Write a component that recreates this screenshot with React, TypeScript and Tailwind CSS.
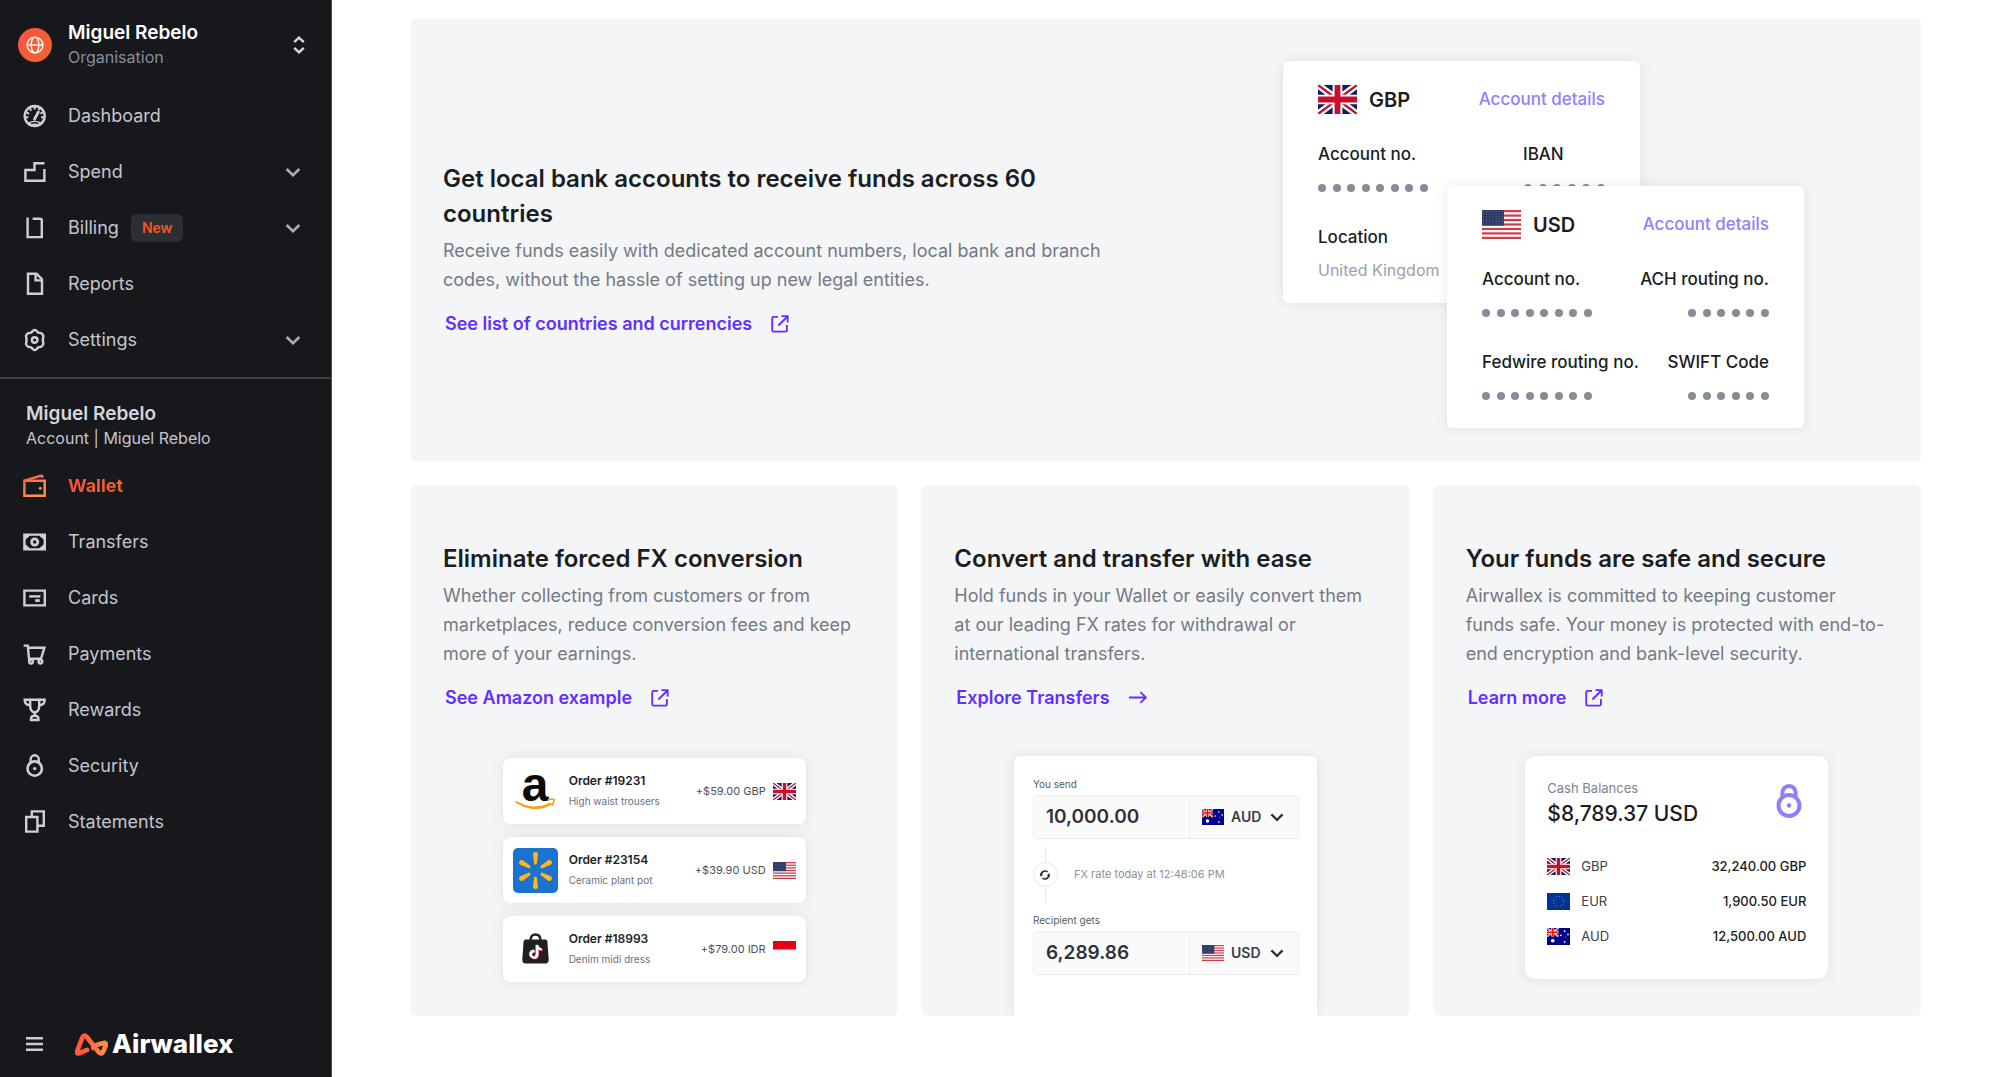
import type { ReactNode } from "react";
import { FaTiktok } from "react-icons/fa6";

type IconName =
  | "dashboard"
  | "spend"
  | "billing"
  | "reports"
  | "settings"
  | "wallet"
  | "transfers"
  | "cards"
  | "payments"
  | "rewards"
  | "security"
  | "statements";

type NavItem = {
  label: string;
  icon: IconName;
  badge?: string;
  expandable?: boolean;
  active?: boolean;
};

const orgNav: NavItem[] = [
  { label: "Dashboard", icon: "dashboard" },
  { label: "Spend", icon: "spend", expandable: true },
  { label: "Billing", icon: "billing", badge: "New", expandable: true },
  { label: "Reports", icon: "reports" },
  { label: "Settings", icon: "settings", expandable: true },
];

const accountNav: NavItem[] = [
  { label: "Wallet", icon: "wallet", active: true },
  { label: "Transfers", icon: "transfers" },
  { label: "Cards", icon: "cards" },
  { label: "Payments", icon: "payments" },
  { label: "Rewards", icon: "rewards" },
  { label: "Security", icon: "security" },
  { label: "Statements", icon: "statements" },
];

type FlagCode = "GB" | "US" | "AU" | "EU" | "ID";

const orders: { id: string; item: string; amount: string; flag: FlagCode; logo: ReactNode }[] = [
  { id: "Order #19231", item: "High waist trousers", amount: "+$59.00 GBP", flag: "GB", logo: <AmazonLogo /> },
  { id: "Order #23154", item: "Ceramic plant pot", amount: "+$39.90 USD", flag: "US", logo: <WalmartLogo /> },
  { id: "Order #18993", item: "Denim midi dress", amount: "+$79.00 IDR", flag: "ID", logo: <TikTokShopLogo /> },
];

const balances: { code: string; flag: FlagCode; amount: string }[] = [
  { code: "GBP", flag: "GB", amount: "32,240.00 GBP" },
  { code: "EUR", flag: "EU", amount: "1,900.50 EUR" },
  { code: "AUD", flag: "AU", amount: "12,500.00 AUD" },
];

export default function App() {
  return (
    <div className="flex min-h-screen bg-white font-[Inter,sans-serif] text-[#1a1d21]">
      <Sidebar />
      <main className="flex-1 px-[78px] pt-[18px] pb-[60px]">
        <Hero />
        <div className="mt-[23px] grid grid-cols-3 gap-[23px]">
          <FeatureCard
            title="Eliminate forced FX conversion"
            body="Whether collecting from customers or from marketplaces, reduce conversion fees and keep more of your earnings."
            link="See Amazon example"
            external
          >
            <OrdersPreview />
          </FeatureCard>
          <FeatureCard
            title="Convert and transfer with ease"
            body="Hold funds in your Wallet or easily convert them at our leading FX rates for withdrawal or international transfers."
            link="Explore Transfers"
          >
            <ConvertPreview />
          </FeatureCard>
          <FeatureCard
            title="Your funds are safe and secure"
            body="Airwallex is committed to keeping customer funds safe. Your money is protected with end-to-end encryption and bank-level security."
            link="Learn more"
            external
          >
            <BalancesPreview />
          </FeatureCard>
        </div>
      </main>
    </div>
  );
}

function Sidebar() {
  return (
    <aside className="flex w-[332px] shrink-0 flex-col border-r border-[#4a4d52] bg-[#17181c] text-[#c3c6cc]">
      <button type="button" className="mt-5 flex items-center gap-4 pr-6 pl-[18px] text-left">
        <span className="flex size-[34px] items-center justify-center rounded-full bg-linear-135 from-[#ff4f42] to-[#e8692a]">
          <GlobeIcon />
        </span>
        <span className="flex-1">
          <span className="block text-[19px] leading-[25px] font-semibold text-white">Miguel Rebelo</span>
          <span className="block text-base leading-[25px] text-[#868e98]">Organisation</span>
        </span>
        <svg viewBox="0 0 16 20" className="h-5 w-4" fill="none" stroke="#d5d8dd" strokeWidth="2.4">
          <path d="M3.2 7.2 8 2.6l4.800 4.600M3.200 12.800 8 17.400l4.800-4.600" />
        </svg>
      </button>

      <nav className="mt-[18px]">
        <NavList items={orgNav} />
      </nav>

      <div className="mt-[9px] border-t-2 border-[#3d4045] px-[26px] pt-[22px]">
        <p className="text-[19px] leading-[25px] font-semibold text-[#d3d6db]">Miguel Rebelo</p>
        <p className="text-base leading-[25px]">Account | Miguel Rebelo</p>
      </div>

      <nav className="mt-[7px]">
        <NavList items={accountNav} />
      </nav>

      <div className="mt-auto flex items-center gap-8 px-[26px] pb-4">
        <button type="button" aria-label="Collapse menu">
          <svg viewBox="0 0 17 16" className="h-4 w-[17px]" stroke="#c9cbd6" strokeWidth="2.6">
            <path d="M0 2.2h17M0 8h17M0 13.800h17" />
          </svg>
        </button>
        <a href="#" className="flex items-center gap-1 text-[26px] leading-[34px] font-extrabold text-white">
          <svg viewBox="0 0 98 68" className="h-[23px] w-[33px]" fill="none">
            <defs>
              <linearGradient id="mark" x1="0" y1="0" x2="1" y2="0">
                <stop offset="0.3" stopColor="#ff5a40" />
                <stop offset="0.85" stopColor="#ff8a3c" />
              </linearGradient>
            </defs>
            <path
              d="M36 50 13 60Q3 63 7 53L22 13Q27 2 35 12L70 56Q79 66 84 54L91 38Q94 27 83 30L68 34Q60 37 54 44"
              stroke="url(#mark)"
              strokeWidth="14"
              strokeLinecap="round"
              strokeLinejoin="round"
            />
          </svg>
          Airwallex
        </a>
      </div>
    </aside>
  );
}

function NavList({ items }: { items: NavItem[] }) {
  return (
    <ul>
      {items.map((item) => (
        <li key={item.label}>
          <a
            href="#"
            aria-current={item.active ? "page" : undefined}
            className="flex h-14 items-center gap-[21px] pr-[30px] pl-[23px] text-lg"
          >
            <NavIcon name={item.icon} />
            <span className="flex flex-1 items-center gap-3">
              {item.active ? (
                <span className="bg-linear-to-r from-[#ff4f42] to-[#e8692a] bg-clip-text font-bold text-transparent">
                  {item.label}
                </span>
              ) : (
                item.label
              )}
              {item.badge ? (
                <span className="rounded-md bg-[#2b2e33] px-[11px] text-sm leading-7 font-semibold text-[#f2562f]">
                  {item.badge}
                </span>
              ) : null}
            </span>
            {item.expandable ? <Chevron className="size-4 text-[#a9aeb8]" /> : null}
          </a>
        </li>
      ))}
    </ul>
  );
}

function Hero() {
  return (
    <section className="flex justify-between rounded-md bg-[#f4f5f7] pt-[43px] pr-[117px] pb-[34px] pl-[33px]">
      <div className="max-w-[680px] pt-[100px]">
        <h2 className="text-2xl leading-[35px] font-semibold">
          Get local bank accounts to receive funds across 60 countries
        </h2>
        <p className="mt-[5px] text-lg leading-[29px] text-[#737a85]">
          Receive funds easily with dedicated account numbers, local bank and branch codes, without the hassle of
          setting up new legal entities.
        </p>
        <TextLink label="See list of countries and currencies" external />
      </div>

      <div className="relative h-[367px] w-[521px] shrink-0">
        <BankCard flag="GB" code="GBP">
          <div className="flex flex-col gap-8">
            <MaskedField label="Account no." />
            <div>
              <p>Location</p>
              <p className="mt-2 text-base font-normal text-[#9aa1ab]">United Kingdom</p>
            </div>
          </div>
          <div className="w-[82px]">
            <MaskedField label="IBAN" short />
          </div>
        </BankCard>
        <div className="absolute right-0 bottom-0">
          <BankCard flag="US" code="USD">
            <div className="flex flex-col gap-8">
              <MaskedField label="Account no." />
              <MaskedField label="Fedwire routing no." />
            </div>
            <div className="flex flex-col gap-8 text-right">
              <MaskedField label="ACH routing no." short />
              <MaskedField label="SWIFT Code" short />
            </div>
          </BankCard>
        </div>
      </div>
    </section>
  );
}

function BankCard({ flag, code, children }: { flag: FlagCode; code: string; children: ReactNode }) {
  return (
    <div className="h-[242px] w-[357px] rounded-md bg-white px-[35px] pt-6 shadow-[0_0_14px_rgba(0,0,0,0.09)]">
      <div className="flex items-center">
        <Flag code={flag} className="h-[29px] w-[39px]" />
        <span className="ml-3 text-xl font-semibold">{code}</span>
        <a href="#" className="ml-auto text-[17px] font-medium text-[#8f80ff]">
          Account details
        </a>
      </div>
      <div className="mt-[27px] flex justify-between text-[17px] leading-[26px] font-medium whitespace-nowrap">
        {children}
      </div>
    </div>
  );
}

function MaskedField({ label, short }: { label: string; short?: boolean }) {
  const count = short ? 6 : 8;
  return (
    <div className="flex flex-col">
      <p>{label}</p>
      <div className={short ? "mt-[17px] ml-auto flex w-[81px] justify-between" : "mt-[17px] flex w-[110px] justify-between"}>
        {Array.from({ length: count }, (_, i) => (
          <span key={i} className="size-2 rounded-full bg-[#868c99]" />
        ))}
      </div>
    </div>
  );
}

function FeatureCard({
  title,
  body,
  link,
  external,
  children,
}: {
  title: string;
  body: string;
  link: string;
  external?: boolean;
  children: ReactNode;
}) {
  return (
    <section className="flex flex-col rounded-md bg-[#f4f5f7] px-[33px] pt-14">
      <h2 className="text-2xl leading-[35px] font-semibold">{title}</h2>
      <p className="mt-[5px] text-lg leading-[29px] text-[#737a85]">{body}</p>
      <TextLink label={link} external={external} />
      <div className="mx-auto mt-11 w-[303px] flex-1">{children}</div>
    </section>
  );
}

function TextLink({ label, external }: { label: string; external?: boolean }) {
  return (
    <a
      href="#"
      className="mt-[15px] flex items-center gap-[19px] px-[2px] text-lg leading-[29px] font-semibold text-[#612fff]"
    >
      {label}
      {external ? (
        <svg viewBox="0 0 18 18" className="size-[18px]" fill="none" stroke="currentColor" strokeWidth="1.8">
          <path d="M7 1.9H2.6Q1.2 1.9 1.2 3.3v11.9q0 1.4 1.4 1.4h11.900q1.400 0 1.400-1.400V10M10.500 1.200h6.200v6.200M16.400 1.500 7.400 10.500" />
        </svg>
      ) : (
        <svg viewBox="0 0 18 18" className="size-[18px]" fill="none" stroke="currentColor" strokeWidth="1.8">
          <path d="M0 8.500h17M11.400 3.100 17 8.500l-5.600 5.400" />
        </svg>
      )}
    </a>
  );
}

function OrdersPreview() {
  return (
    <ul className="flex flex-col gap-[13px] pt-0.5">
      {orders.map((order) => (
        <li
          key={order.id}
          className="flex h-[66px] items-center rounded-lg bg-white px-[10px] shadow-[0_0_14px_rgba(0,0,0,0.09)]"
        >
          <span className="flex size-[45px] items-center justify-center">{order.logo}</span>
          <div className="ml-[11px]">
            <p className="text-xs leading-5 font-semibold">{order.id}</p>
            <p className="text-[10px] leading-5 text-[#6b717b]">{order.item}</p>
          </div>
          <span className="ml-auto text-[11px] text-[#4c5159]">{order.amount}</span>
          <Flag code={order.flag} className="ml-[7px] h-[17px] w-[23px]" />
        </li>
      ))}
    </ul>
  );
}

function ConvertPreview() {
  return (
    <form className="h-full min-h-[260px] rounded-t-md bg-white pt-[18px] pr-[18px] pl-[19px] shadow-[0_0_14px_rgba(0,0,0,0.09)] [clip-path:inset(-20px_-20px_0_-20px)]">
      <AmountField id="send" label="You send" amount="10,000.00" flag="AU" currency="AUD" />
      <div className="flex items-center py-2">
        <span className="flex flex-col items-center">
          <span className="h-[15px] w-px bg-[#e4e6e9]" />
          <span className="flex size-[25px] items-center justify-center rounded-full border border-[#e8eaed]">
            <svg viewBox="0 0 12 12" className="size-3" fill="none" stroke="#2a2d33" strokeWidth="1.6">
              <path d="M2.200 7.200A4 4 0 0 1 8.600 3M9.800 4.800A4 4 0 0 1 3.400 9" />
              <path d="M.6 6.200h3.600L2.400 3.900zM7.800 5.800h3.600L9.600 8.100z" fill="#2a2d33" stroke="none" />
            </svg>
          </span>
          <span className="h-[15px] w-px bg-[#e4e6e9]" />
        </span>
        <span className="ml-4 text-[11px] text-[#8b919b]">FX rate today at 12:48:06 PM</span>
      </div>
      <AmountField id="receive" label="Recipient gets" amount="6,289.86" flag="US" currency="USD" />
    </form>
  );
}

function AmountField({
  id,
  label,
  amount,
  flag,
  currency,
}: {
  id: string;
  label: string;
  amount: string;
  flag: FlagCode;
  currency: string;
}) {
  return (
    <div>
      <label htmlFor={id} className="mb-px block text-[10px] leading-5 text-[#565b64]">
        {label}
      </label>
      <div className="flex h-11 rounded border border-[#eceef0] bg-[#fafafb]">
        <input
          id={id}
          defaultValue={amount}
          className="w-[156px] border-r border-[#eceef0] px-3 text-[19px] font-semibold text-[#2f3238] outline-none"
        />
        <div className="relative flex flex-1 items-center pl-3">
          <Flag code={flag} className="h-4 w-[22px]" />
          <select
            aria-label={`${label} currency`}
            defaultValue={currency}
            className="flex-1 appearance-none bg-transparent pl-[7px] text-sm font-semibold text-[#3b3e45] outline-none"
          >
            <option>{currency}</option>
          </select>
          <Chevron className="pointer-events-none absolute top-1/2 right-[14px] size-[14px] -translate-y-1/2 text-[#2f3238]" />
        </div>
      </div>
    </div>
  );
}

function BalancesPreview() {
  return (
    <div className="h-[223px] rounded-[10px] bg-white px-[22px] pt-[19px] shadow-[0_0_14px_rgba(0,0,0,0.09)]">
      <div className="flex items-center justify-between pr-1">
        <div>
          <p className="text-[13px] leading-[26px] text-[#7d838d]">Cash Balances</p>
          <p className="text-[21px] leading-[26px] font-medium">$8,789.37 USD</p>
        </div>
        <svg viewBox="0 0 26 34" className="h-[34px] w-[26px]" fill="none" stroke="#8c7fff" strokeWidth="4">
          <circle cx="13" cy="21.500" r="10.500" />
          <path d="M6.400 12V8.600a6.600 6.600 0 0 1 13.200 0V12" />
          <circle cx="13" cy="21.500" r="2.200" fill="#8c7fff" stroke="none" />
        </svg>
      </div>
      <table className="mt-[22px] w-full text-[13px]">
        <tbody>
          {balances.map((row) => (
            <tr key={row.code} className="h-[35px]">
              <td className="w-[34px]">
                <Flag code={row.flag} className="h-[17px] w-[23px]" />
              </td>
              <th scope="row" className="text-left font-normal text-[#3c4047]">
                {row.code}
              </th>
              <td className="text-right font-medium">{row.amount}</td>
            </tr>
          ))}
        </tbody>
      </table>
    </div>
  );
}

function Chevron({ className }: { className?: string }) {
  return (
    <svg viewBox="0 0 16 16" className={className} fill="none" stroke="currentColor" strokeWidth="2.6">
      <path d="M1.600 5 8 11.200 14.400 5" />
    </svg>
  );
}

function GlobeIcon() {
  return (
    <svg viewBox="0 0 18 18" className="size-[18px]" fill="none" stroke="#fff" strokeWidth="1.4">
      <circle cx="9" cy="9" r="7.900" />
      <ellipse cx="9" cy="9" rx="3.800" ry="7.900" />
      <path d="M1 9h16" />
    </svg>
  );
}

function NavIcon({ name }: { name: IconName }) {
  return (
    <svg viewBox="0 0 24 24" className="size-6 shrink-0" fill="none" stroke="#cdcfda" strokeWidth="2.4">
      {iconShapes[name]}
    </svg>
  );
}

const iconShapes: Record<IconName, ReactNode> = {
  dashboard: (
    <>
      <circle cx="11.7" cy="12" r="10" />
      <path d="M5 18.6Q11.7 15 18.4 18.6L15.5 21.6H8z" fill="#cdcfda" stroke="none" />
      <path d="M8 19.4Q11.7 18 15.4 19.4" stroke="#17181c" strokeWidth="1.4" />
      <path d="M11.5 15.2 15.4 8" strokeWidth="2.8" strokeLinecap="round" />
      <path
        d="M11.7 2v3.6M6.6 4l1.6 2.8M16.8 4l-1.2 2M3.4 8.4l2.8 1.500M20 8.400l-2.600 1.200M2.400 13.200h3M21 13.200h-3"
        strokeWidth="2"
      />
    </>
  ),
  spend: <path d="M21.500 3.200H11.500V10H2.400v10.800h19V9" />,
  billing: <path d="M4.600 1.600v19.500h14.200V4.600q0-1.800-1.800-1.800H9.600" />,
  reports: (
    <>
      <path d="M5 1.800v20h14V7.200l-5.400-5.400z" />
      <path d="M12.600 2v6.400h6.200" />
    </>
  ),
  settings: (
    <>
      <path
        d="M10.100 2.600Q11.700 1.400 13.300 2.600L15.200 4.600 18 5.200Q19.900 6 20.400 8L19.800 12 20.400 16Q19.900 18 18 18.800L15.200 19.400 13.300 21.400Q11.700 22.600 10.100 21.400L8.200 19.400 5.400 18.800Q3.500 18 3 16L3.600 12 3 8Q3.500 6 5.400 5.200L8.200 4.600z"
        strokeLinejoin="round"
      />
      <circle cx="11.700" cy="12" r="2.800" />
    </>
  ),
  wallet: (
    <>
      <defs>
        <linearGradient id="wallet" gradientUnits="userSpaceOnUse" x1="2" y1="2" x2="14" y2="18">
          <stop offset="0" stopColor="#ff5a45" />
          <stop offset="1" stopColor="#ff933e" />
        </linearGradient>
      </defs>
      <path d="M1.400 6.800h20.300v15H1.400z" stroke="url(#wallet)" />
      <path d="M1.600 6.600 17.800 1.800q1.500-.2 1.700 1.200v.8" stroke="url(#wallet)" />
      <circle cx="17.300" cy="14.300" r="1.500" fill="#ff933e" stroke="none" />
    </>
  ),
  transfers: (
    <>
      <path d="M1.400 4.600h20.400v14.800H1.400z" />
      <path
        d="M2 5h5.200L2 9.400zM21.200 5H16l5.200 4.400zM2 19h5.200L2 14.600zM21.200 19H16l5.200-4.400z"
        fill="#cdcfda"
        strokeWidth="1"
      />
      <circle cx="11.700" cy="12" r="3.100" strokeWidth="2.8" />
    </>
  ),
  cards: (
    <>
      <path d="M1.400 4.600h20.400v14.800H1.400z" />
      <path d="M6.200 10.400h11.200" />
      <path d="M12.200 14.600h4.600" strokeWidth="2.8" />
    </>
  ),
  payments: (
    <>
      <path d="M.6 3.600h4.200L6 16.800h12l3.400-11H5" />
      <circle cx="8" cy="19.600" r="1.900" fill="#17181c" />
      <circle cx="17.400" cy="19.600" r="1.900" fill="#17181c" />
    </>
  ),
  rewards: (
    <>
      <path d="M7.200 1.800h9v6.600q0 4.600-4.500 6.200-4.500-1.600-4.500-6.200z" />
      <path d="M7 1.800H1.700q0 5.200 5.800 5.600M16.400 1.800h5.300q0 5.200-5.800 5.600" />
      <path d="M11.700 14v4M8 22v-1.800q.6-2.400 3.700-2.400t3.700 2.400V22z" />
    </>
  ),
  security: (
    <>
      <circle cx="11.700" cy="14.600" r="7.200" strokeWidth="2.6" />
      <path d="M7.600 8V5.400a4.100 4.100 0 0 1 8.200 0V8" />
      <circle cx="11.700" cy="14.600" r="1.700" fill="#cdcfda" stroke="none" />
    </>
  ),
  statements: (
    <>
      <path d="M3.200 7h11.200v14.600H3.200z" />
      <path d="M8.800 7V1.400h12v14.400h-6" />
    </>
  ),
};

function UnionJack() {
  return (
    <>
      <path fill="#012169" d="M0 0h40v30H0z" />
      <path d="m0 0 40 30M40 0 0 30" stroke="#fff" strokeWidth="7" />
      <path d="m0 0 40 30M40 0 0 30" stroke="#c8102e" strokeWidth="2.4" />
      <path d="M20 0v30M0 15h40" stroke="#fff" strokeWidth="10" />
      <path d="M20 0v30M0 15h40" stroke="#c8102e" strokeWidth="6" />
    </>
  );
}

function Flag({ code, className }: { code: FlagCode; className?: string }) {
  return (
    <svg viewBox="0 0 40 30" preserveAspectRatio="none" className={`shrink-0 ${className ?? ""}`} role="img" aria-label={code}>
      {code === "GB" ? <UnionJack /> : null}
      {code === "US" ? (
        <>
          <path fill="#fff" d="M0 0h40v30H0z" />
          {[0, 1, 2, 3, 4, 5, 6].map((i) => (
            <rect key={i} y={(i * 60) / 13} width="40" height={30 / 13} fill="#cf3f4a" />
          ))}
          <path fill="#2b3a67" d="M0 0h22.500v16.200H0z" />
          {[0, 1, 2, 3, 4, 5].map((y) =>
            [0, 1, 2, 3, 4, 5, 6].map((x) => (
              <circle key={`${x}-${y}`} cx={1.7 + x * 3.2} cy={1.5 + y * 2.6} r="0.5" fill="#8f9abd" />
            )),
          )}
        </>
      ) : null}
      {code === "AU" ? (
        <>
          <path fill="#00008b" d="M0 0h40v30H0z" />
          <path d="m0 0 20 15M20 0 0 15" stroke="#fff" strokeWidth="3" />
          <path d="m0 0 20 15M20 0 0 15" stroke="#f00" strokeWidth="1.200" />
          <path d="M10 0v15M0 7.500h20" stroke="#fff" strokeWidth="5" />
          <path d="M10 0v15M0 7.500h20" stroke="#f00" strokeWidth="3" />
          <circle cx="10" cy="22.600" r="3.200" fill="#fff" />
          <circle cx="30.600" cy="5.600" r="1.500" fill="#fff" />
          <circle cx="24" cy="13" r="1.500" fill="#fff" />
          <circle cx="36.600" cy="11.400" r="1.500" fill="#fff" />
          <circle cx="32.600" cy="16" r="0.800" fill="#fff" />
          <circle cx="30.600" cy="24.400" r="1.600" fill="#fff" />
        </>
      ) : null}
      {code === "EU" ? (
        <>
          <path fill="#039" d="M0 0h40v30H0z" />
          <circle cx="20" cy="15" r="9" fill="none" stroke="#c9b53a" strokeWidth="1.500" strokeDasharray="1.5 3.21" />
        </>
      ) : null}
      {code === "ID" ? (
        <>
          <path fill="#fff" stroke="#e6e6e6" strokeWidth="1.600" d="M0 0h40v30H0z" />
          <path fill="#e70011" d="M0 0h40v15H0z" />
        </>
      ) : null}
    </svg>
  );
}

function AmazonLogo() {
  return (
    <svg viewBox="0 0 45 45" className="size-[45px]" role="img" aria-label="Amazon">
      <text x="22" y="32" textAnchor="middle" fontFamily="Liberation Sans, sans-serif" fontWeight="700" fontSize="48" fill="#0a0a0a">
        a
      </text>
      <path d="M3 32.400q17 10.400 34.600 1.800l.8 1.200Q20.500 45 2.600 33.200z" fill="#f79a0c" stroke="#f79a0c" strokeLinejoin="round" />
      <path d="M34.600 31.200q4.200-1.800 6.600-.8 0 3.200-2.600 6" fill="none" stroke="#f79a0c" strokeWidth="1.500" />
    </svg>
  );
}

function WalmartLogo() {
  return (
    <svg viewBox="0 0 45 45" className="size-[45px]" role="img" aria-label="Walmart">
      <rect width="45" height="45" rx="5" fill="#1a73cf" />
      {[0, 60, 120, 180, 240, 300].map((angle) => (
        <path
          key={angle}
          transform={`rotate(${angle} 22.5 22.5)`}
          d="M21.200 16 20 6.500Q20 4 22.500 4T25 6.500L23.800 16q-1.300 1.200-2.600 0z"
          fill="#ffb71b"
        />
      ))}
    </svg>
  );
}

function TikTokShopLogo() {
  return (
    <svg viewBox="0 0 45 45" className="size-[45px]" role="img" aria-label="TikTok Shop">
      <path d="M17.500 13.500q0-6 5-6t5 6" fill="none" stroke="#231f20" strokeWidth="2.400" />
      <path
        d="M12.600 12.600h19.800q1.700 0 2 1.800l1.300 18q.2 4-3.400 4.200H12.700q-3.600-.2-3.400-4.200l1.300-18q.3-1.800 2-1.800z"
        fill="#231f20"
      />
      <FaTiktok x="15" y="17.400" size="14" color="#25f4ee" />
      <FaTiktok x="16.400" y="18.400" size="14" color="#fe2c55" />
      <FaTiktok x="15.700" y="17.900" size="14" color="#fff" />
    </svg>
  );
}
